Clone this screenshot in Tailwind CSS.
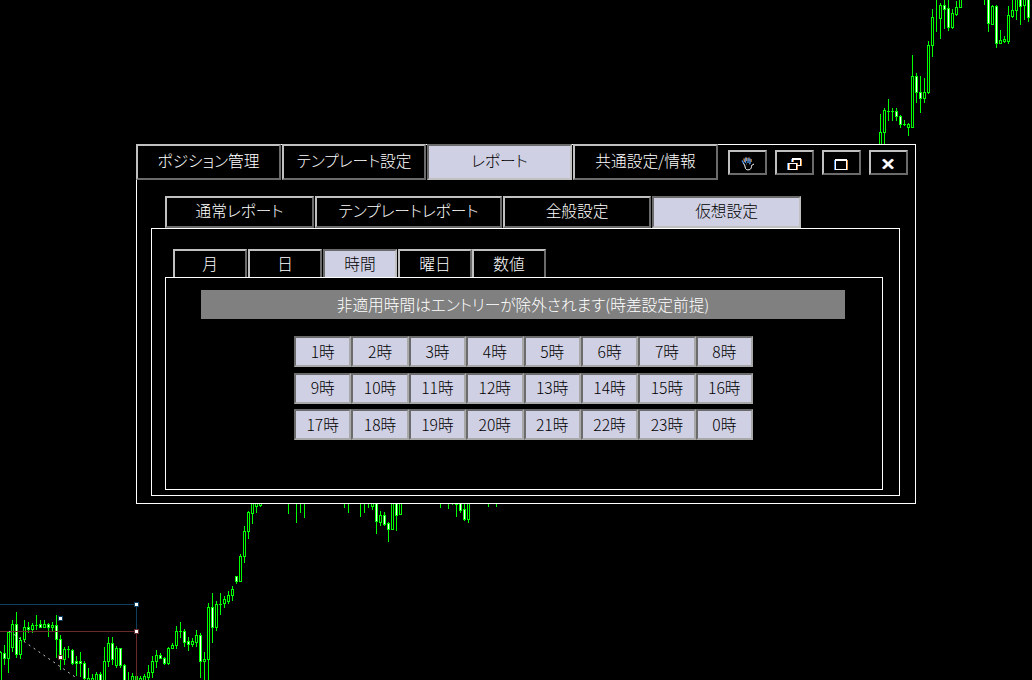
<!DOCTYPE html>
<html lang="ja">
<head>
<meta charset="utf-8">
<title>レポート</title>
<script src="https://cdn.jsdelivr.net/npm/@tailwindcss/browser@4"></script>
</head>
<body class="bg-black">
<div class="relative w-[1032px] h-[680px] overflow-hidden bg-black text-[15.7px] font-light [font-feature-settings:'palt'] leading-none text-white font-['Noto_Sans_CJK_JP',sans-serif]">

  <!-- chart canvas -->
  <svg class="absolute left-0 top-0" width="1032" height="680" viewBox="0 0 1032 680" shape-rendering="crispEdges">
    <path fill="none" stroke="#00ff00" d="M0.5 651V680M4.5 645V665M8.5 632V673M12.5 620V652M16.5 612V658M20.5 637V659M24.5 620V642M28.5 622V633M32.5 623V633M36.5 615V630M40.5 620V628M44.5 620V628M48.5 623V637M52.5 622V632M56.5 615V658M60.5 635V670M64.5 647V665M68.5 646V658M72.5 649V665M76.5 656V676M80.5 652V677M84.5 661V680M88.5 668V680M92.5 674V680M96.5 672V680M100.5 672V680M104.5 647V680M108.5 637V667M112.5 637V665M116.5 646V668M120.5 648V668M124.5 664V680M128.5 672V680M132.5 673V680M136.5 676V680M140.5 676V680M144.5 674V680M148.5 665V680M152.5 656V678M156.5 650V668M160.5 653V659M164.5 657V665M168.5 647V665M172.5 643V649M176.5 626V649M180.5 622V638M184.5 629V647M188.5 637V651M192.5 638V647M196.5 630V647M200.5 633V678M204.5 652V680M208.5 603V680M212.5 593V643M216.5 601V631M220.5 593V615M224.5 596V608M228.5 591V604M232.5 586V601M236.5 577V584M240.5 554V581M244.5 526V563M248.5 511V539M252.5 500V524M256.5 500V513M260.5 500V507M288.5 500V514M296.5 500V523M300.5 500V513M304.5 500V518M344.5 500V508M348.5 500V513M360.5 500V517M364.5 500V513M368.5 500V508M372.5 500V510M376.5 500V534M380.5 511V526M384.5 512V526M388.5 522V542M392.5 500V530M396.5 500V531M400.5 500V514M440.5 500V508M448.5 500V509M452.5 500V505M456.5 500V517M460.5 500V513M464.5 500V521M468.5 500V523M488.5 500V507M496.5 500V507M880.5 114V146M884.5 108V146M888.5 99V121M892.5 108V121M896.5 108V121M900.5 115V128M904.5 120V126M908.5 123V136M912.5 55V128M916.5 73V103M920.5 76V113M924.5 78V103M928.5 41V94M932.5 9V57M936.5 0V32M940.5 3V39M944.5 0V29M948.5 0V31M952.5 9V29M956.5 1V16M960.5 0V8M984.5 0V5M988.5 0V32M992.5 5V25M996.5 5V48M1000.5 30V43M1004.5 36V43M1008.5 6V44M1012.5 0V18M1016.5 0V20M1020.5 0V25M1024.5 0V20M1028.5 0V22"/>
    <path fill="#000" stroke="#00ff00" d="M-.5 652.5h2V680h-2zM7.5 632.5h2V658.5h-2zM11.5 624.5h2V647.5h-2zM19.5 640.5h2V654.5h-2zM23.5 627.5h2V639.5h-2zM31.5 625.5h2V629.5h-2zM43.5 624.5h2V627.5h-2zM51.5 625.5h2V627.5h-2zM63.5 649.5h2V659.5h-2zM87.5 678.5h2V680h-2zM91.5 678.5h2V680h-2zM95.5 674.5h2V680h-2zM103.5 661.5h2V680h-2zM107.5 643.5h2V661.5h-2zM115.5 648.5h2V665.5h-2zM131.5 676.5h2V680h-2zM135.5 676.5h2V680h-2zM139.5 678.5h2V680h-2zM143.5 676.5h2V680h-2zM147.5 672.5h2V677.5h-2zM151.5 661.5h2V672.5h-2zM155.5 655.5h2V661.5h-2zM167.5 648.5h2V663.5h-2zM171.5 645.5h2V648.5h-2zM175.5 631.5h2V645.5h-2zM191.5 641.5h2V644.5h-2zM195.5 635.5h2V642.5h-2zM203.5 659.5h2V661.5h-2zM207.5 607.5h2V659.5h-2zM215.5 604.5h2V627.5h-2zM223.5 599.5h2V603.5h-2zM227.5 595.5h2V601.5h-2zM231.5 589.5h2V595.5h-2zM239.5 556.5h2V581.5h-2zM243.5 531.5h2V556.5h-2zM247.5 512.5h2V531.5h-2zM251.5 500.5h2V513.5h-2zM255.5 500.5h2V506.5h-2zM259.5 500.5h2V505.5h-2zM371.5 500.5h2V506.5h-2zM379.5 515.5h2V522.5h-2zM391.5 500.5h2V529.5h-2zM399.5 500.5h2V514.5h-2zM455.5 500.5h2V504.5h-2zM467.5 500.5h2V519.5h-2zM879.5 132.5h2V146h-2zM883.5 110.5h2V132.5h-2zM907.5 124.5h2V127.5h-2zM911.5 76.5h2V127.5h-2zM923.5 92.5h2V98.5h-2zM927.5 45.5h2V92.5h-2zM931.5 17.5h2V45.5h-2zM939.5 5.5h2V18.5h-2zM951.5 13.5h2V27.5h-2zM955.5 7.5h2V14.5h-2zM959.5 -1h2V7.5h-2zM991.5 6.5h2V24.5h-2zM999.5 40.5h2V43.5h-2zM1003.5 39.5h2V41.5h-2zM1007.5 15.5h2V41.5h-2zM1011.5 10.5h2V16.5h-2zM1015.5 -1h2V10.5h-2zM1023.5 -1h2V5.5h-2z"/>
    <path fill="#fff" stroke="#00ff00" d="M3.5 653.5h2V658.5h-2zM15.5 624.5h2V654.5h-2zM27.5 627.5h2V629.5h-2zM39.5 624.5h2V627.5h-2zM47.5 624.5h2V627.5h-2zM55.5 625.5h2V639.5h-2zM59.5 639.5h2V655.5h-2zM71.5 650.5h2V663.5h-2zM75.5 661.5h2V663.5h-2zM79.5 661.5h2V663.5h-2zM83.5 663.5h2V678.5h-2zM99.5 674.5h2V680h-2zM111.5 643.5h2V659.5h-2zM119.5 648.5h2V665.5h-2zM123.5 665.5h2V680h-2zM159.5 655.5h2V658.5h-2zM163.5 658.5h2V663.5h-2zM183.5 631.5h2V642.5h-2zM187.5 641.5h2V644.5h-2zM199.5 635.5h2V661.5h-2zM211.5 607.5h2V627.5h-2zM235.5 576.5h2V581.5h-2zM375.5 500.5h2V521.5h-2zM383.5 515.5h2V524.5h-2zM387.5 523.5h2V529.5h-2zM395.5 500.5h2V515.5h-2zM459.5 500.5h2V510.5h-2zM463.5 509.5h2V519.5h-2zM895.5 111.5h2V116.5h-2zM899.5 116.5h2V124.5h-2zM915.5 76.5h2V92.5h-2zM919.5 92.5h2V98.5h-2zM943.5 5.5h2V9.5h-2zM947.5 8.5h2V27.5h-2zM987.5 -1h2V23.5h-2zM995.5 6.5h2V43.5h-2zM1019.5 -1h2V6.5h-2zM1027.5 -1h2V17.5h-2z"/>
    <path fill="none" stroke="#00ff00" d="M35 625.5h3M155 631.5h0M887 111.5h3M891 111.5h3M903 124.5h3M67 649.5h3M219 604.5h3M179 631.5h3"/>
    <path fill="none" stroke="#0f3f5f" d="M0 604.5H136.5V631"/>
    <path fill="none" stroke="#6b2a2a" d="M0 631.5H136.5V680"/>
    <path fill="none" stroke="#c8c8c8" stroke-dasharray="2 4" shape-rendering="auto" d="M9 631L78 679"/>
    <rect x="134.5" y="602.5" width="4" height="4" fill="#fff" stroke="#0f3f5f"/>
    <rect x="58.5" y="616.5" width="4" height="4" fill="#fff" stroke="#0f3f5f"/>
    <rect x="134.5" y="629.5" width="4" height="4" fill="#fff" stroke="#6b2a2a"/>
    <rect x="58.5" y="655.5" width="4" height="4" fill="#fff" stroke="#6b2a2a"/>
  </svg>

  <!-- window -->
  <div class="absolute left-[136px] top-[144px] w-[780px] h-[360px] bg-black border border-white flex flex-col">

    <!-- main tabs -->
    <div class="flex -mt-px -ml-px h-[36px] shrink-0">
      <div class="w-[145px] h-[36px] mr-px pb-[2px] flex items-center justify-center bg-black border-2 border-t-[#c0c0c0] border-l-[#c0c0c0] border-r-[#6b6b6b] border-b-[#6b6b6b]">ポジション管理</div>
      <div class="w-[144px] h-[36px] mr-px pb-[2px] flex items-center justify-center bg-black border-2 border-t-[#c0c0c0] border-l-[#c0c0c0] border-r-[#6b6b6b] border-b-[#6b6b6b]">テンプレート設定</div>
      <div class="w-[145px] h-[36px] mr-px pb-[2px] flex items-center justify-center bg-[#d0d0e4] text-black border-2 border-t-[#6b6b6b] border-l-[#6b6b6b] border-r-[#c0c0c0] border-b-[#c0c0c0]">レポート</div>
      <div class="w-[145px] h-[36px] pb-[2px] flex items-center justify-center bg-black border-2 border-t-[#c0c0c0] border-l-[#c0c0c0] border-r-[#6b6b6b] border-b-[#6b6b6b]">共通設定/情報</div>
      <div class="flex gap-2 ml-[10px] mt-[6px]">
        <div class="w-[39px] h-[25px] flex items-center justify-center border-2 border-t-[#c0c0c0] border-l-[#c0c0c0] border-r-[#6b6b6b] border-b-[#6b6b6b]">
          <svg width="14" height="14" viewBox="0 0 14 14" fill="none" class="mt-[2px]">
            <path stroke="#fff" d="M3.5 7.5L4.5 11.5C5 13 8 13.5 9.5 12C10.5 11 10.5 9.5 10.5 8.5L13 7"/>
            <path stroke="#e8913a" stroke-width="1.4" d="M3 1.5L3.5 5M5.5 .5V4M8 .5V4M10 2V5"/>
            <path stroke="#4a8fe0" stroke-width="1.4" d="M1 3.5L3 7M4.5 .5V6M7 1V6M9 1.5V7"/>
            <path stroke="#ddd" d="M2 6.5L3.5 7.5M5.5 7H6M8 7H8.5"/>
          </svg>
        </div>
        <div class="w-[39px] h-[25px] flex items-center justify-center border-2 border-t-[#c0c0c0] border-l-[#c0c0c0] border-r-[#6b6b6b] border-b-[#6b6b6b]">
          <svg width="15" height="13" viewBox="0 0 15 13" fill="none" shape-rendering="crispEdges" class="mt-1">
            <path stroke="#e8913a" d="M6 3.5V1.5H14.5V7.5H10M2 5.5H10.5V11.5H2z"/>
            <path stroke="#4a8fe0" d="M4.5 3.5V1.5H13V7.5H10M.5 5.5H9V11.5H.5z"/>
            <path stroke="#fff" d="M5.5 4V1.5H13.5V7.5H10M1.5 5.5H9.5V11.5H1.5z"/>
            <path stroke="#fff" d="M5 .5H14"/>
          </svg>
        </div>
        <div class="w-[39px] h-[25px] flex items-center justify-center border-2 border-t-[#c0c0c0] border-l-[#c0c0c0] border-r-[#6b6b6b] border-b-[#6b6b6b]">
          <svg width="14" height="12" viewBox="0 0 14 12" fill="none" shape-rendering="crispEdges" class="mt-[5px] -ml-[2px]">
            <path stroke="#e8913a" d="M13.5 1V11"/>
            <path stroke="#4a8fe0" d="M.5 1V11"/>
            <path stroke="#fff" d="M1.5 1.5H12.5V10.5H1.5z"/>
            <path stroke="#fff" d="M1 .5H13"/>
          </svg>
        </div>
        <div class="w-[39px] h-[25px] flex items-center justify-center border-2 border-t-[#c0c0c0] border-l-[#c0c0c0] border-r-[#6b6b6b] border-b-[#6b6b6b]">
          <svg width="14" height="14" viewBox="0 0 14 14" fill="none" stroke-width="2.2" class="mt-[3px] -ml-px">
            <path stroke="#e8913a" d="M3 2.5L12.5 11.5M12.5 2.5L3 11.5"/>
            <path stroke="#4a8fe0" d="M1.5 2.5L11 11.5M11 2.5L1.5 11.5"/>
            <path stroke="#fff" d="M2.2 2.5L11.8 11.5M11.8 2.5L2.2 11.5"/>
          </svg>
        </div>
      </div>
    </div>

    <!-- report sub tabs -->
    <div class="flex gap-px ml-[28px] mt-4 h-[32px] shrink-0">
      <div class="w-[149px] pb-[2px] flex items-center justify-center border-2 border-t-[#c0c0c0] border-l-[#c0c0c0] border-r-[#6b6b6b] border-b-[#6b6b6b]">通常レポート</div>
      <div class="w-[187px] pb-[2px] flex items-center justify-center border-2 border-t-[#c0c0c0] border-l-[#c0c0c0] border-r-[#6b6b6b] border-b-[#6b6b6b]">テンプレートレポート</div>
      <div class="w-[148px] pb-[2px] flex items-center justify-center border-2 border-t-[#c0c0c0] border-l-[#c0c0c0] border-r-[#6b6b6b] border-b-[#6b6b6b]">全般設定</div>
      <div class="w-[149px] pb-[2px] flex items-center justify-center bg-[#d0d0e4] text-black border-2 border-t-[#6b6b6b] border-l-[#6b6b6b] border-r-[#c0c0c0] border-b-[#c0c0c0]">仮想設定</div>
    </div>

    <!-- virtual settings panel -->
    <div class="ml-[14px] w-[749px] h-[268px] border border-white flex flex-col shrink-0">
      <div class="flex gap-px ml-[21px] mt-[20px] h-[28px] shrink-0">
        <div class="w-[74px] flex items-center justify-center border-2 border-b-0 border-t-[#c0c0c0] border-l-[#c0c0c0] border-r-[#6b6b6b]">月</div>
        <div class="w-[74px] flex items-center justify-center border-2 border-b-0 border-t-[#c0c0c0] border-l-[#c0c0c0] border-r-[#6b6b6b]">日</div>
        <div class="w-[74px] flex items-center justify-center bg-[#d0d0e4] text-black border-2 border-b-0 border-t-[#6b6b6b] border-l-[#6b6b6b] border-r-[#c0c0c0]">時間</div>
        <div class="w-[74px] flex items-center justify-center border-2 border-b-0 border-t-[#c0c0c0] border-l-[#c0c0c0] border-r-[#6b6b6b]">曜日</div>
        <div class="w-[74px] -ml-px flex items-center justify-center border-2 border-b-0 border-t-[#c0c0c0] border-l-[#c0c0c0] border-r-[#6b6b6b]">数値</div>
      </div>

      <div class="ml-[13px] w-[718px] h-[213px] border border-white shrink-0">
        <div class="ml-[35px] mt-3 w-[644px] h-[29px] bg-[#808080] flex items-center justify-center">非適用時間はエントリーが除外されます(時差設定前提)</div>
        <div class="ml-[128px] mt-[17px] w-[459px] grid grid-cols-8 auto-rows-[31px] gap-y-[5.5px] text-black">
          <div class="flex items-center justify-center bg-[#d0d0e4] border-2 border-t-[#6b6b6b] border-l-[#6b6b6b] border-r-[#a8a8a8] border-b-[#a8a8a8]">1時</div>
          <div class="flex items-center justify-center bg-[#d0d0e4] border-2 border-t-[#6b6b6b] border-l-[#6b6b6b] border-r-[#a8a8a8] border-b-[#a8a8a8]">2時</div>
          <div class="flex items-center justify-center bg-[#d0d0e4] border-2 border-t-[#6b6b6b] border-l-[#6b6b6b] border-r-[#a8a8a8] border-b-[#a8a8a8]">3時</div>
          <div class="flex items-center justify-center bg-[#d0d0e4] border-2 border-t-[#6b6b6b] border-l-[#6b6b6b] border-r-[#a8a8a8] border-b-[#a8a8a8]">4時</div>
          <div class="flex items-center justify-center bg-[#d0d0e4] border-2 border-t-[#6b6b6b] border-l-[#6b6b6b] border-r-[#a8a8a8] border-b-[#a8a8a8]">5時</div>
          <div class="flex items-center justify-center bg-[#d0d0e4] border-2 border-t-[#6b6b6b] border-l-[#6b6b6b] border-r-[#a8a8a8] border-b-[#a8a8a8]">6時</div>
          <div class="flex items-center justify-center bg-[#d0d0e4] border-2 border-t-[#6b6b6b] border-l-[#6b6b6b] border-r-[#a8a8a8] border-b-[#a8a8a8]">7時</div>
          <div class="flex items-center justify-center bg-[#d0d0e4] border-2 border-t-[#6b6b6b] border-l-[#6b6b6b] border-r-[#a8a8a8] border-b-[#a8a8a8]">8時</div>
          <div class="flex items-center justify-center bg-[#d0d0e4] border-2 border-t-[#6b6b6b] border-l-[#6b6b6b] border-r-[#a8a8a8] border-b-[#a8a8a8]">9時</div>
          <div class="flex items-center justify-center bg-[#d0d0e4] border-2 border-t-[#6b6b6b] border-l-[#6b6b6b] border-r-[#a8a8a8] border-b-[#a8a8a8]">10時</div>
          <div class="flex items-center justify-center bg-[#d0d0e4] border-2 border-t-[#6b6b6b] border-l-[#6b6b6b] border-r-[#a8a8a8] border-b-[#a8a8a8]">11時</div>
          <div class="flex items-center justify-center bg-[#d0d0e4] border-2 border-t-[#6b6b6b] border-l-[#6b6b6b] border-r-[#a8a8a8] border-b-[#a8a8a8]">12時</div>
          <div class="flex items-center justify-center bg-[#d0d0e4] border-2 border-t-[#6b6b6b] border-l-[#6b6b6b] border-r-[#a8a8a8] border-b-[#a8a8a8]">13時</div>
          <div class="flex items-center justify-center bg-[#d0d0e4] border-2 border-t-[#6b6b6b] border-l-[#6b6b6b] border-r-[#a8a8a8] border-b-[#a8a8a8]">14時</div>
          <div class="flex items-center justify-center bg-[#d0d0e4] border-2 border-t-[#6b6b6b] border-l-[#6b6b6b] border-r-[#a8a8a8] border-b-[#a8a8a8]">15時</div>
          <div class="flex items-center justify-center bg-[#d0d0e4] border-2 border-t-[#6b6b6b] border-l-[#6b6b6b] border-r-[#a8a8a8] border-b-[#a8a8a8]">16時</div>
          <div class="flex items-center justify-center bg-[#d0d0e4] border-2 border-t-[#6b6b6b] border-l-[#6b6b6b] border-r-[#a8a8a8] border-b-[#a8a8a8]">17時</div>
          <div class="flex items-center justify-center bg-[#d0d0e4] border-2 border-t-[#6b6b6b] border-l-[#6b6b6b] border-r-[#a8a8a8] border-b-[#a8a8a8]">18時</div>
          <div class="flex items-center justify-center bg-[#d0d0e4] border-2 border-t-[#6b6b6b] border-l-[#6b6b6b] border-r-[#a8a8a8] border-b-[#a8a8a8]">19時</div>
          <div class="flex items-center justify-center bg-[#d0d0e4] border-2 border-t-[#6b6b6b] border-l-[#6b6b6b] border-r-[#a8a8a8] border-b-[#a8a8a8]">20時</div>
          <div class="flex items-center justify-center bg-[#d0d0e4] border-2 border-t-[#6b6b6b] border-l-[#6b6b6b] border-r-[#a8a8a8] border-b-[#a8a8a8]">21時</div>
          <div class="flex items-center justify-center bg-[#d0d0e4] border-2 border-t-[#6b6b6b] border-l-[#6b6b6b] border-r-[#a8a8a8] border-b-[#a8a8a8]">22時</div>
          <div class="flex items-center justify-center bg-[#d0d0e4] border-2 border-t-[#6b6b6b] border-l-[#6b6b6b] border-r-[#a8a8a8] border-b-[#a8a8a8]">23時</div>
          <div class="flex items-center justify-center bg-[#d0d0e4] border-2 border-t-[#6b6b6b] border-l-[#6b6b6b] border-r-[#a8a8a8] border-b-[#a8a8a8]">0時</div>
        </div>
      </div>
    </div>
  </div>
</div>
</body>
</html>
